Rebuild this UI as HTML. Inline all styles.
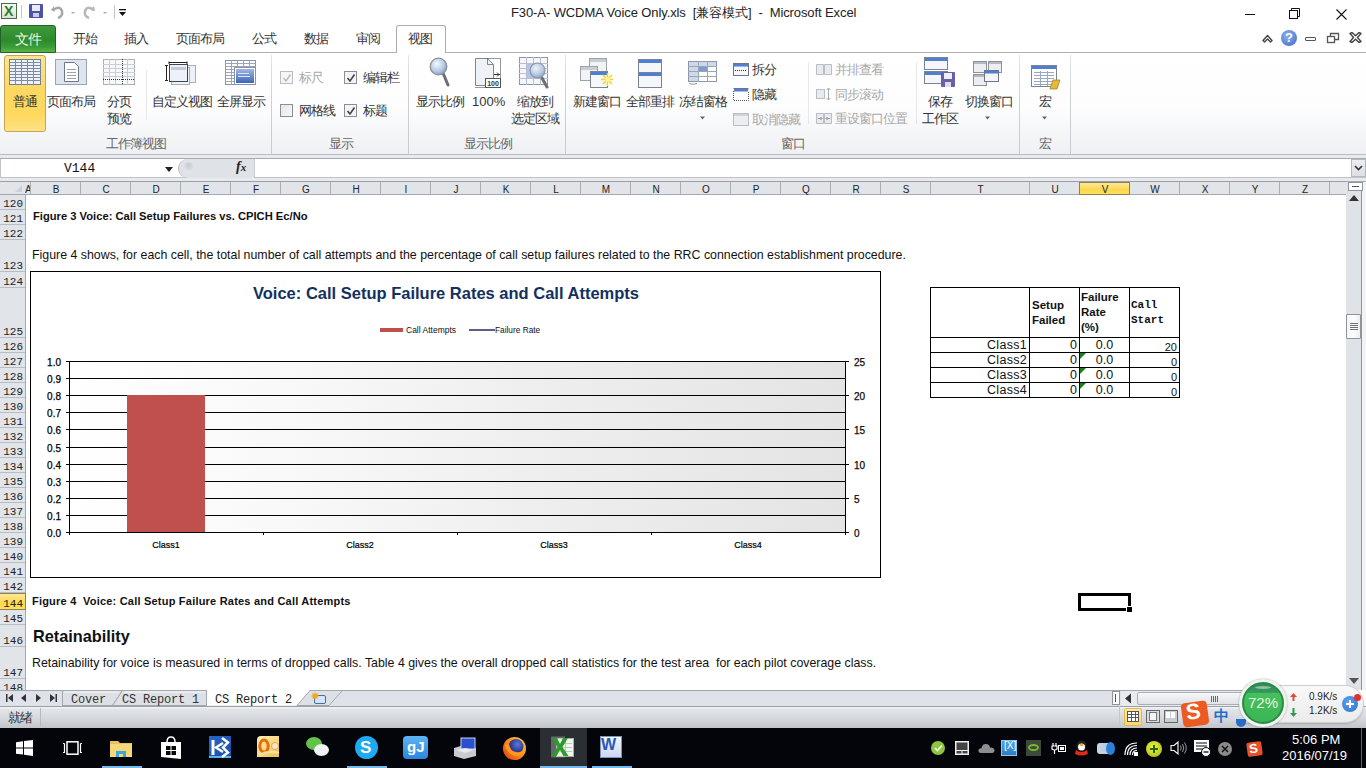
<!DOCTYPE html>
<html><head><meta charset="utf-8">
<style>
*{margin:0;padding:0;box-sizing:border-box}
html,body{width:1366px;height:768px;overflow:hidden;background:#fff;font-family:"Liberation Sans",sans-serif;color:#222}
.a{position:absolute}
.t{position:absolute;white-space:nowrap;line-height:1}
.cj{font-size:13px;letter-spacing:-1px;color:#333}
</style></head><body>
<!-- TITLE BAR -->
<div class="a" style="left:0;top:0;width:1366px;height:26px;background:#fff"></div>
<!-- excel icon -->
<div class="a" style="left:1px;top:3px;width:16px;height:16px;border:1px solid #4a6b4a;background:linear-gradient(#f4f8f2,#d5e6d0)"></div>
<div class="t" style="left:4px;top:4px;font-size:14px;font-weight:bold;color:#2d7a2d;">X</div>
<div class="a" style="left:21px;top:5px;width:1px;height:13px;background:#c8c8c8"></div>
<!-- save -->
<div class="a" style="left:29px;top:4px;width:14px;height:14px;background:#4b52a8;border-radius:1px"></div>
<div class="a" style="left:32px;top:5px;width:8px;height:6px;background:#e8ecf8"></div>
<div class="a" style="left:33px;top:13px;width:6px;height:4px;background:#c8cce8"></div>
<!-- undo/redo -->
<svg class="a" style="left:50px;top:4px" width="80" height="16" viewBox="0 0 80 16">
 <path d="M4 6 L4 2 L1 6 L5 8 Z" fill="#a8a8a8"/>
 <path d="M3 6 Q10 1 12 7 Q13 12 8 14" stroke="#a8a8a8" stroke-width="2.5" fill="none"/>
 <path d="M21 8 L25 8 L23 10 Z" fill="#a8a8a8"/>
 <path d="M44 6 Q37 1 35 7 Q34 12 39 14" stroke="#b8b8b8" stroke-width="2.5" fill="none"/>
 <path d="M44 2 L45 7 L40 6 Z" fill="#b8b8b8"/>
 <path d="M53 8 L57 8 L55 10 Z" fill="#a8a8a8"/>
 <rect x="64" y="1" width="1" height="14" fill="#c8c8c8"/>
 <rect x="69" y="5" width="7" height="1.3" fill="#111"/>
 <path d="M69 8 L76 8 L72.5 12 Z" fill="#111"/>
</svg>
<div class="t" style="left:511px;top:6px;font-size:13px;letter-spacing:-0.1px;color:#222">F30-A- WCDMA Voice Only.xls&nbsp; [兼容模式]&nbsp; -&nbsp; Microsoft Excel</div>
<!-- window controls -->
<div class="a" style="left:1245px;top:14px;width:10px;height:1px;background:#111"></div>
<svg class="a" style="left:1289px;top:8px" width="12" height="12"><rect x="0.5" y="2.5" width="8" height="8" fill="none" stroke="#111"/><path d="M2.5 2.5 V0.5 H10.5 V8.5 H8.5" fill="none" stroke="#111"/></svg>
<svg class="a" style="left:1336px;top:9px" width="11" height="11"><path d="M0.5 0.5 L10.5 10.5 M10.5 0.5 L0.5 10.5" stroke="#111" stroke-width="1.1"/></svg>

<!-- TAB ROW -->
<div class="a" style="left:0;top:52px;width:1366px;height:1px;background:#aeb2b8"></div>
<div class="a" style="left:0;top:25px;width:56px;height:28px;border-radius:3px 3px 0 0;background:linear-gradient(#3f9a3a,#2d8a2e 55%,#3a9c36 80%,#58b444);border:1px solid #25602a"></div>
<div class="t cj" style="left:15px;top:32px;color:#eaf8e2;font-size:14px">文件</div>
<div class="t cj" style="left:73px;top:32px">开始</div>
<div class="t cj" style="left:124px;top:32px">插入</div>
<div class="t cj" style="left:176px;top:32px">页面布局</div>
<div class="t cj" style="left:252px;top:32px">公式</div>
<div class="t cj" style="left:304px;top:32px">数据</div>
<div class="t cj" style="left:356px;top:32px">审阅</div>
<div class="a" style="left:396px;top:25px;width:50px;height:29px;background:#fff;border:1px solid #a9adb3;border-bottom:none;border-radius:3px 3px 0 0"></div>
<div class="t cj" style="left:408px;top:32px">视图</div>

<!-- RIBBON BODY -->
<div class="a" id="ribbon" style="left:0;top:53px;width:1366px;height:101px;background:linear-gradient(#fff 0%,#fdfdfe 55%,#eef0f3 100%)"></div>
<div class="a" style="left:0;top:154px;width:1366px;height:1px;background:#b9bec5"></div>
<div class="a" style="left:0;top:155px;width:1366px;height:3px;background:#e8eaee"></div>
<div class="a" style="left:0;top:158px;width:1366px;height:1px;background:#a6abb2"></div>


<!-- RIBBON CONTENT -->
<!-- group separators -->
<div class="a" style="left:271px;top:55px;width:1px;height:99px;background:linear-gradient(#e2e5e9,#cdd1d6 40%,#c8ccd2)"></div>
<div class="a" style="left:408px;top:55px;width:1px;height:99px;background:linear-gradient(#e2e5e9,#cdd1d6 40%,#c8ccd2)"></div>
<div class="a" style="left:565px;top:55px;width:1px;height:99px;background:linear-gradient(#e2e5e9,#cdd1d6 40%,#c8ccd2)"></div>
<div class="a" style="left:1019px;top:55px;width:1px;height:99px;background:linear-gradient(#e2e5e9,#cdd1d6 40%,#c8ccd2)"></div>
<div class="a" style="left:1070px;top:55px;width:1px;height:99px;background:linear-gradient(#e2e5e9,#cdd1d6 40%,#c8ccd2)"></div>
<div class="a" style="left:146px;top:70px;width:1px;height:50px;background:#e6e8eb"></div>
<div class="a" style="left:808px;top:62px;width:1px;height:62px;background:#e6e8eb"></div>
<div class="a" style="left:916px;top:62px;width:1px;height:62px;background:#e6e8eb"></div>
<!-- normal view highlighted -->
<div class="a" style="left:4px;top:55px;width:42px;height:77px;border:1px solid #c9a352;border-radius:3px;background:linear-gradient(#fde48e,#fcd862 45%,#fdd95e 80%,#fde38a 100%)"></div>
<svg class="a" style="left:9px;top:59px" width="32" height="26" viewBox="0 0 32 26">
 <rect x="0.5" y="0.5" width="31" height="25" fill="#eef2fb" stroke="#6f7c94"/>
 <g stroke="#7d8aa3" stroke-width="1"><path d="M0 3.5H32M0 6.5H32M0 9.5H32M0 12.5H32M0 15.5H32M0 18.5H32M0 21.5H32M6.5 0V26M12.5 0V26M18.5 0V26M24.5 0V26"/></g>
</svg>
<div class="t cj" style="left:13px;top:95px">普通</div>
<!-- page layout -->
<svg class="a" style="left:55px;top:59px" width="32" height="26" viewBox="0 0 32 26">
 <rect x="0.5" y="0.5" width="31" height="25" fill="#dfe5ee" stroke="#9aa4b3"/>
 <path d="M9.5 3.5H19.5L23.5 7.5V22.5H9.5Z" fill="#fff" stroke="#6f7886"/>
 <g stroke="#9aa4b3"><path d="M12 10.5H21M12 13.5H21M12 16.5H21M12 19.5H21"/></g>
</svg>
<div class="t cj" style="left:47px;top:95px">页面布局</div>
<!-- page break -->
<svg class="a" style="left:103px;top:59px" width="32" height="26" viewBox="0 0 32 26">
 <rect x="0.5" y="0.5" width="31" height="25" fill="#f7f8fa" stroke="#a9b0bb"/>
 <g stroke="#c9ced6"><path d="M0 5.5H32M0 9.5H32M0 13.5H32M0 17.5H32M6.5 0V26M12.5 0V26M24.5 0V26"/></g>
 <path d="M19.5 0V26M0 20.5H32" stroke="#333" stroke-dasharray="1 1"/>
</svg>
<div class="t cj" style="left:107px;top:95px">分页</div>
<div class="t cj" style="left:107px;top:112px">预览</div>
<!-- custom views -->
<svg class="a" style="left:165px;top:61px" width="32" height="25" viewBox="0 0 32 25">
 <rect x="11.5" y="4.5" width="19" height="17" fill="#eef0f4" stroke="#a9aeb7"/>
 <rect x="6.5" y="6.5" width="18" height="17" fill="#f0f3f8" stroke="#a9aeb7"/>
 <rect x="4.5" y="3.5" width="18" height="17" fill="#edf1f8" stroke="#3f4552"/>
 <rect x="6" y="6" width="15" height="3" fill="#c6cad2"/>
 <path d="M1.5 4V20M0 4.5H3M0 19.5H3M4 0.5V3M22 0.5V3M4 1.5H22" stroke="#222"/>
</svg>
<div class="t cj" style="left:152px;top:95px">自定义视图</div>
<!-- full screen -->
<svg class="a" style="left:225px;top:60px" width="32" height="25" viewBox="0 0 32 25">
 <rect x="0.5" y="0.5" width="30" height="24" fill="#fff" stroke="#8793a6"/>
 <g stroke="#9aa6b8"><path d="M0 3.5H31M0 6.5H31M0 9.5H31M0 12.5H31M0 15.5H31M0 18.5H31M0 21.5H31M6.5 0V25M12.5 0V25M18.5 0V25M24.5 0V25"/></g>
 <rect x="9.5" y="7.5" width="21" height="17" fill="#fff" stroke="#8793a6"/>
 <rect x="11" y="9" width="18" height="14" fill="url(#fsg)"/>
 <defs><linearGradient id="fsg" x1="0" y1="0" x2="0" y2="1"><stop offset="0" stop-color="#9fb8e4"/><stop offset="1" stop-color="#3d64b8"/></linearGradient></defs>
 <path d="M13 13.5H24M13 16.5H25" stroke="#dfe8f8"/>
</svg>
<div class="t cj" style="left:217px;top:95px">全屏显示</div>
<div class="t cj" style="left:106px;top:137px;color:#666">工作簿视图</div>

<!-- SHOW group -->
<div class="a" style="left:280px;top:71px;width:13px;height:13px;border:1px solid #b9bdc3;background:#f5f6f8"></div>
<svg class="a" style="left:282px;top:73px" width="10" height="10"><path d="M1.5 5 L4 8 L8.5 1.5" stroke="#b9bdc3" stroke-width="1.6" fill="none"/></svg>
<div class="t cj" style="left:299px;top:71px;color:#a8a8a8">标尺</div>
<div class="a" style="left:344px;top:71px;width:13px;height:13px;border:1px solid #8b8f95;background:#f3f4f6"></div>
<svg class="a" style="left:346px;top:73px" width="10" height="10"><path d="M1.5 5 L4 8 L8.5 1.5" stroke="#444" stroke-width="1.6" fill="none"/></svg>
<div class="t cj" style="left:363px;top:71px">编辑栏</div>
<div class="a" style="left:280px;top:104px;width:13px;height:13px;border:1px solid #8b8f95;background:linear-gradient(135deg,#e3e5e8,#f8f9fa)"></div>
<div class="t cj" style="left:299px;top:104px">网格线</div>
<div class="a" style="left:344px;top:104px;width:13px;height:13px;border:1px solid #8b8f95;background:#f3f4f6"></div>
<svg class="a" style="left:346px;top:106px" width="10" height="10"><path d="M1.5 5 L4 8 L8.5 1.5" stroke="#444" stroke-width="1.6" fill="none"/></svg>
<div class="t cj" style="left:363px;top:104px">标题</div>
<div class="t cj" style="left:329px;top:137px;color:#666">显示</div>

<!-- ZOOM group -->
<svg class="a" style="left:428px;top:57px" width="24" height="32" viewBox="0 0 24 32">
 <defs><radialGradient id="mg" cx="0.4" cy="0.35" r="0.7"><stop offset="0" stop-color="#f4f8fc"/><stop offset="0.6" stop-color="#b8cde4"/><stop offset="1" stop-color="#7f9cc0"/></radialGradient></defs>
 <path d="M15 16 L20 28" stroke="#6b6f76" stroke-width="3" stroke-linecap="round"/>
 <circle cx="10.5" cy="9.5" r="8.3" fill="url(#mg)" stroke="#8a9099" stroke-width="1.3"/>
</svg>
<div class="t cj" style="left:416px;top:95px">显示比例</div>
<svg class="a" style="left:474px;top:57px" width="28" height="32" viewBox="0 0 28 32">
 <path d="M1.5 1.5H13.5L19.5 7.5V28.5H1.5Z" fill="#eef1f6" stroke="#7e8794"/>
 <path d="M13.5 1.5V7.5H19.5" fill="none" stroke="#7e8794"/>
 <path d="M1.5 30.5H26.5V1.5H13" fill="none" stroke="#333" stroke-dasharray="1 1"/>
 <path d="M20 17.5H26M23 15.5L25 17.5L23 19.5" stroke="#333" fill="none"/>
 <rect x="11.5" y="21.5" width="15" height="9" fill="#fff" stroke="#555"/>
 <text x="19" y="29" font-size="7" text-anchor="middle" font-family="Liberation Sans" font-weight="bold" fill="#333">100</text>
</svg>
<div class="t" style="left:472px;top:95px;font-size:13px;color:#333">100%</div>
<svg class="a" style="left:519px;top:57px" width="32" height="32" viewBox="0 0 32 32">
 <rect x="0.5" y="0.5" width="28" height="27" fill="#f4f6fb" stroke="#8d97a8"/>
 <g stroke="#b6c0d2"><path d="M0 6.5H29M0 11.5H29M0 16.5H29M0 21.5H29M7.5 0V28M14.5 0V28M21.5 0V28"/></g>
 <rect x="8" y="7" width="13" height="14" fill="#b5c3ea"/>
 <path d="M23 21 L28 30" stroke="#6b6f76" stroke-width="3" stroke-linecap="round"/>
 <circle cx="18.5" cy="13.5" r="7.5" fill="url(#mg)" stroke="#8a9099" stroke-width="1.2" opacity="0.9"/>
</svg>
<div class="t cj" style="left:517px;top:95px">缩放到</div>
<div class="t cj" style="left:511px;top:112px">选定区域</div>
<div class="t cj" style="left:464px;top:137px;color:#666">显示比例</div>

<!-- WINDOW group -->
<svg class="a" style="left:580px;top:58px" width="33" height="30" viewBox="0 0 33 30">
 <rect x="9.5" y="0.5" width="17" height="15" fill="#f2f3f5" stroke="#9ea3ab"/><rect x="10" y="1" width="16" height="3" fill="#c9cdd3"/>
 <rect x="0.5" y="8.5" width="17" height="14" fill="#f2f3f5" stroke="#9ea3ab"/><rect x="1" y="9" width="16" height="3" fill="#c9cdd3"/>
 <rect x="10.5" y="13.5" width="17" height="16" fill="#f6f8fb" stroke="#7a8391"/><rect x="11" y="14" width="16" height="3" fill="#4f7fd0"/>
 <path d="M23 17 L32 26 M32 17 L23 26 M27.5 15 V28 M21 21.5 H33" stroke="#f3d31b" stroke-width="1.5"/>
 <circle cx="27.5" cy="21.5" r="2.5" fill="#fff59a"/>
</svg>
<div class="t cj" style="left:573px;top:95px">新建窗口</div>
<svg class="a" style="left:638px;top:59px" width="24" height="29" viewBox="0 0 24 29">
 <rect x="0.5" y="0.5" width="23" height="28" fill="#f4f6fa" stroke="#7a8391"/>
 <rect x="1" y="1" width="22" height="3" fill="#4f7fd0"/>
 <rect x="1" y="14" width="22" height="3" fill="#4f7fd0"/>
 <path d="M0 13.5H24" stroke="#7a8391"/>
</svg>
<div class="t cj" style="left:626px;top:95px">全部重排</div>
<svg class="a" style="left:688px;top:61px" width="30" height="24" viewBox="0 0 30 24">
 <rect x="0.5" y="0.5" width="28" height="20" fill="#fff" stroke="#8d97a8"/>
 <rect x="1" y="1" width="9" height="19" fill="#cfd8e8"/><rect x="1" y="1" width="27" height="4" fill="#cfd8e8"/>
 <g stroke="#9aa6ba"><path d="M0 5.5H29M0 10.5H29M0 15.5H29M10.5 0V21M19.5 0V21"/></g>
 <rect x="11" y="6" width="8" height="4" fill="#7d9bd3"/>
 <path d="M1 22.5 Q5 24 9 22.5" stroke="#8d97a8" fill="none"/>
</svg>
<div class="t cj" style="left:679px;top:95px">冻结窗格</div>
<svg class="a" style="left:699px;top:116px" width="7" height="4"><path d="M1 0.5H6L3.5 3.5Z" fill="#666"/></svg>
<svg class="a" style="left:733px;top:63px" width="16" height="13" viewBox="0 0 16 13">
 <rect x="0.5" y="0.5" width="15" height="12" fill="#f4f6fa" stroke="#6d7685"/><rect x="1" y="1" width="14" height="2.5" fill="#4f7fd0"/>
 <path d="M2 7.5H14" stroke="#333" stroke-dasharray="1 1"/>
</svg>
<div class="t cj" style="left:752px;top:63px">拆分</div>
<svg class="a" style="left:733px;top:88px" width="16" height="13" viewBox="0 0 16 13">
 <rect x="1" y="1" width="14" height="2.5" fill="#4f7fd0"/><path d="M0.5 0.5H15.5" stroke="#6d7685"/>
 <path d="M0.5 3V12.5H15.5V3" fill="none" stroke="#555" stroke-dasharray="1 1"/>
</svg>
<div class="t cj" style="left:752px;top:88px">隐藏</div>
<svg class="a" style="left:733px;top:113px" width="16" height="13" viewBox="0 0 16 13">
 <rect x="0.5" y="0.5" width="15" height="12" fill="#eceef1" stroke="#b9bec5"/><rect x="1" y="1" width="14" height="2" fill="#cfd3d9"/>
</svg>
<div class="t cj" style="left:752px;top:113px;color:#a8a8a8">取消隐藏</div>
<svg class="a" style="left:816px;top:63px" width="16" height="12" viewBox="0 0 16 12">
 <path d="M0.5 1.5H7.5V11.5H0.5Z M8.5 1.5H15.5V11.5H8.5Z" fill="#e8eaed" stroke="#b9bec5"/>
</svg>
<div class="t cj" style="left:835px;top:63px;color:#a8a8a8">并排查看</div>
<svg class="a" style="left:816px;top:87px" width="16" height="14" viewBox="0 0 16 14">
 <rect x="0.5" y="2.5" width="8" height="9" fill="#e8eaed" stroke="#b9bec5"/>
 <path d="M12.5 1V13M10.5 3L12.5 1L14.5 3M10.5 11L12.5 13L14.5 11" stroke="#aaa" fill="none"/>
</svg>
<div class="t cj" style="left:835px;top:88px;color:#a8a8a8">同步滚动</div>
<svg class="a" style="left:816px;top:112px" width="16" height="13" viewBox="0 0 16 13">
 <path d="M0.5 1.5H7.5V11.5H0.5Z M8.5 1.5H15.5V11.5H8.5Z" fill="#e8eaed" stroke="#b9bec5"/>
 <path d="M2 6.5H6M4.5 5L6 6.5L4.5 8M14 6.5H10M11.5 5L10 6.5L11.5 8" stroke="#999" fill="none"/>
</svg>
<div class="t cj" style="left:835px;top:112px;color:#a8a8a8">重设窗口位置</div>
<svg class="a" style="left:924px;top:57px" width="32" height="31" viewBox="0 0 32 31">
 <rect x="0.5" y="0.5" width="23" height="12" fill="#f4f6fa" stroke="#7a8391"/><rect x="1" y="1" width="22" height="3" fill="#4f7fd0"/>
 <rect x="0.5" y="14.5" width="23" height="12" fill="#f4f6fa" stroke="#7a8391"/><rect x="1" y="15" width="22" height="3" fill="#4f7fd0"/>
 <rect x="17" y="15" width="14" height="15" rx="1" fill="#6b5fa8"/>
 <rect x="20" y="16" width="8" height="6" fill="#eef"/><rect x="21" y="25" width="6" height="5" fill="#dde"/>
</svg>
<div class="t cj" style="left:928px;top:95px">保存</div>
<div class="t cj" style="left:922px;top:112px">工作区</div>
<svg class="a" style="left:973px;top:61px" width="30" height="25" viewBox="0 0 30 25">
 <rect x="0.5" y="0.5" width="13" height="11" fill="#eceef1" stroke="#8b9099"/><rect x="1" y="1" width="12" height="2" fill="#b5bac1"/>
 <rect x="15.5" y="0.5" width="13" height="11" fill="#eceef1" stroke="#8b9099"/><rect x="16" y="1" width="12" height="2" fill="#b5bac1"/>
 <rect x="0.5" y="13.5" width="13" height="11" fill="#eceef1" stroke="#8b9099"/><rect x="1" y="14" width="12" height="2" fill="#b5bac1"/>
 <rect x="11.5" y="9.5" width="14" height="11" fill="#f4f6fa" stroke="#6d7685"/><rect x="12" y="10" width="13" height="2.5" fill="#4f7fd0"/>
</svg>
<div class="t cj" style="left:965px;top:95px">切换窗口</div>
<svg class="a" style="left:984px;top:116px" width="7" height="4"><path d="M1 0.5H6L3.5 3.5Z" fill="#666"/></svg>
<div class="t cj" style="left:781px;top:137px;color:#666">窗口</div>

<!-- MACRO group -->
<svg class="a" style="left:1031px;top:65px" width="30" height="25" viewBox="0 0 30 25">
 <rect x="0.5" y="0.5" width="25" height="21" fill="#fff" stroke="#7a8391"/><rect x="1" y="1" width="24" height="3" fill="#4f7fd0"/>
 <g stroke="#98a8c4"><path d="M3 7.5H23M3 10.5H23M3 13.5H23M3 16.5H23M3 19.5H23M9.5 6V21M16.5 6V21"/></g>
 <path d="M19 24 L22 15 L29 15 L26 24 Z" fill="#e2b93b" stroke="#a8841c" stroke-width="0.8"/>
</svg>
<div class="t cj" style="left:1039px;top:95px">宏</div>
<svg class="a" style="left:1041px;top:116px" width="7" height="4"><path d="M1 0.5H6L3.5 3.5Z" fill="#666"/></svg>
<div class="t cj" style="left:1039px;top:137px;color:#666">宏</div>

<!-- right of tabs -->
<svg class="a" style="left:1262px;top:34px" width="11" height="9" viewBox="0 0 11 9"><path d="M1 6.5 L5.5 1.5 L10 6.5 L8.5 8 L5.5 5 L2.5 8 Z" fill="#fff" stroke="#444" stroke-width="1.4" stroke-linejoin="round"/></svg>
<div class="a" style="left:1281px;top:30px;width:16px;height:16px;border-radius:50%;background:radial-gradient(circle at 40% 35%,#8fb0ea,#3a6ac6)"></div>
<div class="t" style="left:1285px;top:31px;font-size:13px;font-weight:bold;color:#fff">?</div>
<div class="a" style="left:1305px;top:37px;width:11px;height:4px;border:1.5px solid #555;border-radius:1px"></div>
<svg class="a" style="left:1326px;top:32px" width="14" height="12"><rect x="1.5" y="4.5" width="7" height="6" fill="none" stroke="#555" stroke-width="1.3"/><path d="M4.5 4.5V1.5H12.5V7.5H8.5" fill="none" stroke="#555" stroke-width="1.3"/></svg>
<svg class="a" style="left:1349px;top:32px" width="13" height="11" viewBox="0 0 13 11"><path d="M1 1.5 L3 0.5 L6.5 3.8 L10 0.5 L12 1.5 L8.5 5.5 L12 9.5 L10 10.5 L6.5 7.2 L3 10.5 L1 9.5 L4.5 5.5 Z" fill="#fff" stroke="#444" stroke-width="1.4" stroke-linejoin="round"/></svg>

<!-- FORMULA BAR -->
<div class="a" style="left:0;top:159px;width:1366px;height:19px;background:#fff"></div>
<div class="a" style="left:0;top:177px;width:1366px;height:1px;background:#c0c4ca"></div>
<div class="a" style="left:0;top:178px;width:1366px;height:3px;background:#e8eaee"></div>
<div class="a" style="left:0;top:181px;width:1366px;height:1px;background:#a6abb2"></div>
<div class="a" style="left:0;top:159px;width:1px;height:19px;background:#c0c4ca"></div>
<div class="t" style="left:64px;top:162px;font-family:'Liberation Mono',monospace;font-size:13px;color:#111">V144</div>
<svg class="a" style="left:165px;top:167px" width="8" height="5"><path d="M0 0H8L4 5Z" fill="#222"/></svg>
<div class="a" style="left:178px;top:159px;width:77px;height:19px;background:#dfe2e7;border-radius:10px 0 0 10px;border-left:1px solid #b9bdc4"></div>
<div class="a" style="left:183px;top:162px;width:11px;height:11px;border-radius:50%;background:radial-gradient(circle at 50% 30%,#c6c9ce,#e4e6ea 70%)"></div>
<div class="a" style="left:254px;top:159px;width:1px;height:19px;background:#c9cdd2"></div>
<div class="t" style="left:236px;top:160px;font-family:'Liberation Serif',serif;font-style:italic;font-weight:bold;font-size:14px;color:#222">f<span style="font-size:11px">x</span></div>
<div class="a" style="left:1351px;top:159px;width:15px;height:18px;background:linear-gradient(#eceef1,#dcdfe4);border:1px solid #b5bac1"></div>
<svg class="a" style="left:1354px;top:165px" width="9" height="6"><path d="M1 1 L4.5 4.5 L8 1" stroke="#333" stroke-width="1.6" fill="none"/></svg>

<!-- COLUMN HEADERS -->
<div class="a" style="left:0;top:181px;width:1346px;height:14px;background:#e1e4e8;border-top:1px solid #9a9fa6;border-bottom:1px solid #a4a9b0"></div>
<svg class="a" style="left:15px;top:185px" width="7" height="7"><path d="M7 0V7H0Z" fill="#cdd1d6"/></svg>
<div class="a" style="left:30px;top:182px;width:1px;height:12px;background:#a9aeb5"></div>
<div class="a" style="left:80px;top:182px;width:1px;height:12px;background:#a9aeb5"></div>
<div class="t" style="left:31px;top:185px;width:50px;text-align:center;font-size:10px;color:#222">B</div>
<div class="a" style="left:130px;top:182px;width:1px;height:12px;background:#a9aeb5"></div>
<div class="t" style="left:81px;top:185px;width:50px;text-align:center;font-size:10px;color:#222">C</div>
<div class="a" style="left:180px;top:182px;width:1px;height:12px;background:#a9aeb5"></div>
<div class="t" style="left:131px;top:185px;width:50px;text-align:center;font-size:10px;color:#222">D</div>
<div class="a" style="left:230px;top:182px;width:1px;height:12px;background:#a9aeb5"></div>
<div class="t" style="left:181px;top:185px;width:50px;text-align:center;font-size:10px;color:#222">E</div>
<div class="a" style="left:280px;top:182px;width:1px;height:12px;background:#a9aeb5"></div>
<div class="t" style="left:231px;top:185px;width:50px;text-align:center;font-size:10px;color:#222">F</div>
<div class="a" style="left:330px;top:182px;width:1px;height:12px;background:#a9aeb5"></div>
<div class="t" style="left:281px;top:185px;width:50px;text-align:center;font-size:10px;color:#222">G</div>
<div class="a" style="left:380px;top:182px;width:1px;height:12px;background:#a9aeb5"></div>
<div class="t" style="left:331px;top:185px;width:50px;text-align:center;font-size:10px;color:#222">H</div>
<div class="a" style="left:430px;top:182px;width:1px;height:12px;background:#a9aeb5"></div>
<div class="t" style="left:381px;top:185px;width:50px;text-align:center;font-size:10px;color:#222">I</div>
<div class="a" style="left:480px;top:182px;width:1px;height:12px;background:#a9aeb5"></div>
<div class="t" style="left:431px;top:185px;width:50px;text-align:center;font-size:10px;color:#222">J</div>
<div class="a" style="left:530px;top:182px;width:1px;height:12px;background:#a9aeb5"></div>
<div class="t" style="left:481px;top:185px;width:50px;text-align:center;font-size:10px;color:#222">K</div>
<div class="a" style="left:580px;top:182px;width:1px;height:12px;background:#a9aeb5"></div>
<div class="t" style="left:531px;top:185px;width:50px;text-align:center;font-size:10px;color:#222">L</div>
<div class="a" style="left:630px;top:182px;width:1px;height:12px;background:#a9aeb5"></div>
<div class="t" style="left:581px;top:185px;width:50px;text-align:center;font-size:10px;color:#222">M</div>
<div class="a" style="left:680px;top:182px;width:1px;height:12px;background:#a9aeb5"></div>
<div class="t" style="left:631px;top:185px;width:50px;text-align:center;font-size:10px;color:#222">N</div>
<div class="a" style="left:730px;top:182px;width:1px;height:12px;background:#a9aeb5"></div>
<div class="t" style="left:681px;top:185px;width:50px;text-align:center;font-size:10px;color:#222">O</div>
<div class="a" style="left:780px;top:182px;width:1px;height:12px;background:#a9aeb5"></div>
<div class="t" style="left:731px;top:185px;width:50px;text-align:center;font-size:10px;color:#222">P</div>
<div class="a" style="left:830px;top:182px;width:1px;height:12px;background:#a9aeb5"></div>
<div class="t" style="left:781px;top:185px;width:50px;text-align:center;font-size:10px;color:#222">Q</div>
<div class="a" style="left:880px;top:182px;width:1px;height:12px;background:#a9aeb5"></div>
<div class="t" style="left:831px;top:185px;width:50px;text-align:center;font-size:10px;color:#222">R</div>
<div class="a" style="left:930px;top:182px;width:1px;height:12px;background:#a9aeb5"></div>
<div class="t" style="left:881px;top:185px;width:50px;text-align:center;font-size:10px;color:#222">S</div>
<div class="a" style="left:1029px;top:182px;width:1px;height:12px;background:#a9aeb5"></div>
<div class="t" style="left:931px;top:185px;width:99px;text-align:center;font-size:10px;color:#222">T</div>
<div class="a" style="left:1079px;top:182px;width:1px;height:12px;background:#a9aeb5"></div>
<div class="t" style="left:1030px;top:185px;width:50px;text-align:center;font-size:10px;color:#222">U</div>
<div class="a" style="left:1079px;top:182px;width:51px;height:13px;background:linear-gradient(#fde89a,#fcd84e 60%,#fde25a);border:1px solid #8f7f52"></div>
<div class="t" style="left:1080px;top:185px;width:50px;text-align:center;font-size:10px;color:#222">V</div>
<div class="a" style="left:1179px;top:182px;width:1px;height:12px;background:#a9aeb5"></div>
<div class="t" style="left:1130px;top:185px;width:50px;text-align:center;font-size:10px;color:#222">W</div>
<div class="a" style="left:1229px;top:182px;width:1px;height:12px;background:#a9aeb5"></div>
<div class="t" style="left:1180px;top:185px;width:50px;text-align:center;font-size:10px;color:#222">X</div>
<div class="a" style="left:1279px;top:182px;width:1px;height:12px;background:#a9aeb5"></div>
<div class="t" style="left:1230px;top:185px;width:50px;text-align:center;font-size:10px;color:#222">Y</div>
<div class="a" style="left:1329px;top:182px;width:1px;height:12px;background:#a9aeb5"></div>
<div class="t" style="left:1280px;top:185px;width:50px;text-align:center;font-size:10px;color:#222">Z</div>
<div class="t" style="left:25px;top:185px;width:5px;overflow:hidden;font-size:10px;color:#222">A</div>

<!-- ROW HEADERS -->
<div class="a" style="left:0;top:195px;width:26px;height:495px;background:#e1e4e8;border-right:1px solid #a4a9b0"></div>
<div class="a" style="left:0;top:209px;width:25px;height:1px;background:#b7bdc5"></div>
<div class="t" style="left:0;top:199px;width:23px;text-align:right;font-family:'Liberation Mono',monospace;font-size:11px;color:#222">120</div>
<div class="a" style="left:0;top:224px;width:25px;height:1px;background:#b7bdc5"></div>
<div class="t" style="left:0;top:214px;width:23px;text-align:right;font-family:'Liberation Mono',monospace;font-size:11px;color:#222">121</div>
<div class="a" style="left:0;top:239px;width:25px;height:1px;background:#b7bdc5"></div>
<div class="t" style="left:0;top:229px;width:23px;text-align:right;font-family:'Liberation Mono',monospace;font-size:11px;color:#222">122</div>
<div class="a" style="left:0;top:271px;width:25px;height:1px;background:#b7bdc5"></div>
<div class="t" style="left:0;top:261px;width:23px;text-align:right;font-family:'Liberation Mono',monospace;font-size:11px;color:#222">123</div>
<div class="a" style="left:0;top:287px;width:25px;height:1px;background:#b7bdc5"></div>
<div class="t" style="left:0;top:277px;width:23px;text-align:right;font-family:'Liberation Mono',monospace;font-size:11px;color:#222">124</div>
<div class="a" style="left:0;top:337px;width:25px;height:1px;background:#b7bdc5"></div>
<div class="t" style="left:0;top:327px;width:23px;text-align:right;font-family:'Liberation Mono',monospace;font-size:11px;color:#222">125</div>
<div class="a" style="left:0;top:352px;width:25px;height:1px;background:#b7bdc5"></div>
<div class="t" style="left:0;top:342px;width:23px;text-align:right;font-family:'Liberation Mono',monospace;font-size:11px;color:#222">126</div>
<div class="a" style="left:0;top:367px;width:25px;height:1px;background:#b7bdc5"></div>
<div class="t" style="left:0;top:357px;width:23px;text-align:right;font-family:'Liberation Mono',monospace;font-size:11px;color:#222">127</div>
<div class="a" style="left:0;top:382px;width:25px;height:1px;background:#b7bdc5"></div>
<div class="t" style="left:0;top:372px;width:23px;text-align:right;font-family:'Liberation Mono',monospace;font-size:11px;color:#222">128</div>
<div class="a" style="left:0;top:397px;width:25px;height:1px;background:#b7bdc5"></div>
<div class="t" style="left:0;top:387px;width:23px;text-align:right;font-family:'Liberation Mono',monospace;font-size:11px;color:#222">129</div>
<div class="a" style="left:0;top:412px;width:25px;height:1px;background:#b7bdc5"></div>
<div class="t" style="left:0;top:402px;width:23px;text-align:right;font-family:'Liberation Mono',monospace;font-size:11px;color:#222">130</div>
<div class="a" style="left:0;top:427px;width:25px;height:1px;background:#b7bdc5"></div>
<div class="t" style="left:0;top:417px;width:23px;text-align:right;font-family:'Liberation Mono',monospace;font-size:11px;color:#222">131</div>
<div class="a" style="left:0;top:442px;width:25px;height:1px;background:#b7bdc5"></div>
<div class="t" style="left:0;top:432px;width:23px;text-align:right;font-family:'Liberation Mono',monospace;font-size:11px;color:#222">132</div>
<div class="a" style="left:0;top:457px;width:25px;height:1px;background:#b7bdc5"></div>
<div class="t" style="left:0;top:447px;width:23px;text-align:right;font-family:'Liberation Mono',monospace;font-size:11px;color:#222">133</div>
<div class="a" style="left:0;top:472px;width:25px;height:1px;background:#b7bdc5"></div>
<div class="t" style="left:0;top:462px;width:23px;text-align:right;font-family:'Liberation Mono',monospace;font-size:11px;color:#222">134</div>
<div class="a" style="left:0;top:487px;width:25px;height:1px;background:#b7bdc5"></div>
<div class="t" style="left:0;top:477px;width:23px;text-align:right;font-family:'Liberation Mono',monospace;font-size:11px;color:#222">135</div>
<div class="a" style="left:0;top:502px;width:25px;height:1px;background:#b7bdc5"></div>
<div class="t" style="left:0;top:492px;width:23px;text-align:right;font-family:'Liberation Mono',monospace;font-size:11px;color:#222">136</div>
<div class="a" style="left:0;top:517px;width:25px;height:1px;background:#b7bdc5"></div>
<div class="t" style="left:0;top:507px;width:23px;text-align:right;font-family:'Liberation Mono',monospace;font-size:11px;color:#222">137</div>
<div class="a" style="left:0;top:532px;width:25px;height:1px;background:#b7bdc5"></div>
<div class="t" style="left:0;top:522px;width:23px;text-align:right;font-family:'Liberation Mono',monospace;font-size:11px;color:#222">138</div>
<div class="a" style="left:0;top:547px;width:25px;height:1px;background:#b7bdc5"></div>
<div class="t" style="left:0;top:537px;width:23px;text-align:right;font-family:'Liberation Mono',monospace;font-size:11px;color:#222">139</div>
<div class="a" style="left:0;top:562px;width:25px;height:1px;background:#b7bdc5"></div>
<div class="t" style="left:0;top:552px;width:23px;text-align:right;font-family:'Liberation Mono',monospace;font-size:11px;color:#222">140</div>
<div class="a" style="left:0;top:577px;width:25px;height:1px;background:#b7bdc5"></div>
<div class="t" style="left:0;top:567px;width:23px;text-align:right;font-family:'Liberation Mono',monospace;font-size:11px;color:#222">141</div>
<div class="a" style="left:0;top:592px;width:25px;height:1px;background:#b7bdc5"></div>
<div class="t" style="left:0;top:582px;width:23px;text-align:right;font-family:'Liberation Mono',monospace;font-size:11px;color:#222">142</div>
<div class="a" style="left:0;top:593px;width:26px;height:17px;background:linear-gradient(#fde89a,#fcd84e 60%,#fde25a);border:1px solid #8f7f52;border-left:none"></div>
<div class="t" style="left:0;top:599px;width:23px;text-align:right;font-family:'Liberation Mono',monospace;font-size:11px;color:#222">144</div>
<div class="a" style="left:0;top:624px;width:25px;height:1px;background:#b7bdc5"></div>
<div class="t" style="left:0;top:614px;width:23px;text-align:right;font-family:'Liberation Mono',monospace;font-size:11px;color:#222">145</div>
<div class="a" style="left:0;top:646px;width:25px;height:1px;background:#b7bdc5"></div>
<div class="t" style="left:0;top:636px;width:23px;text-align:right;font-family:'Liberation Mono',monospace;font-size:11px;color:#222">146</div>
<div class="a" style="left:0;top:678px;width:25px;height:1px;background:#b7bdc5"></div>
<div class="t" style="left:0;top:668px;width:23px;text-align:right;font-family:'Liberation Mono',monospace;font-size:11px;color:#222">147</div>
<div class="t" style="left:0;top:683px;width:23px;text-align:right;font-family:'Liberation Mono',monospace;font-size:11px;color:#222">148</div>

<!-- SHEET CONTENT -->
<div class="t" style="left:33px;top:211px;font-size:11.2px;font-weight:bold;color:#111">Figure 3 Voice: Call Setup Failures vs. CPICH Ec/No</div>
<div class="t" style="left:32px;top:249px;font-size:12.36px;color:#111">Figure 4 shows, for each cell, the total number of call attempts and the percentage of call setup failures related to the RRC connection establishment procedure.</div>

<!-- CHART -->
<div class="a" style="left:30px;top:271px;width:851px;height:307px;border:1px solid #000;background:#fff"></div>
<div class="a" style="left:70px;top:361px;width:775px;height:171px;background:linear-gradient(90deg,#fff 0%,#f8f8f8 30%,#eeeeee 62%,#e4e4e4 100%)"></div>
<div class="t" style="left:253px;top:285px;font-size:16.5px;font-weight:bold;color:#13315f">Voice: Call Setup Failure Rates and Call Attempts</div>
<div class="a" style="left:380px;top:328px;width:23px;height:4px;background:#c0504d"></div>
<div class="t" style="left:406px;top:326px;font-size:8.5px;color:#111">Call Attempts</div>
<div class="a" style="left:469px;top:329px;width:26px;height:2px;background:#5e5f87"></div>
<div class="t" style="left:495px;top:326px;font-size:8.3px;color:#111">Failure Rate</div>
<svg class="a" style="left:30px;top:271px" width="851" height="307">
 <rect x="36" y="90" width="779" height="1" fill="#000"/><rect x="36" y="107" width="779" height="1" fill="#000"/><rect x="36" y="124" width="779" height="1" fill="#000"/><rect x="36" y="141" width="779" height="1" fill="#000"/><rect x="36" y="158" width="779" height="1" fill="#000"/><rect x="36" y="176" width="779" height="1" fill="#000"/><rect x="36" y="193" width="779" height="1" fill="#000"/><rect x="36" y="210" width="779" height="1" fill="#000"/><rect x="36" y="227" width="779" height="1" fill="#000"/><rect x="36" y="244" width="779" height="1" fill="#000"/><rect x="36" y="261" width="779" height="1" fill="#000"/>
 <rect x="97" y="124" width="78" height="137" fill="#c0504d"/>
 <rect x="39" y="90" width="1" height="174" fill="#000"/>
 <rect x="815" y="90" width="1" height="174" fill="#000"/>
 <rect x="233" y="261" width="1" height="3" fill="#000"/>
 <rect x="427" y="261" width="1" height="3" fill="#000"/>
 <rect x="621" y="261" width="1" height="3" fill="#000"/>
 <rect x="815" y="90" width="4" height="1" fill="#000"/><rect x="815" y="124" width="4" height="1" fill="#000"/><rect x="815" y="158" width="4" height="1" fill="#000"/><rect x="815" y="193" width="4" height="1" fill="#000"/><rect x="815" y="227" width="4" height="1" fill="#000"/><rect x="815" y="261" width="4" height="1" fill="#000"/>
</svg>
<div class="t" style="left:30px;top:358px;width:31px;text-align:right;font-size:10px;color:#000;-webkit-text-stroke:0.25px #000">1.0</div><div class="t" style="left:30px;top:375px;width:31px;text-align:right;font-size:10px;color:#000;-webkit-text-stroke:0.25px #000">0.9</div><div class="t" style="left:30px;top:392px;width:31px;text-align:right;font-size:10px;color:#000;-webkit-text-stroke:0.25px #000">0.8</div><div class="t" style="left:30px;top:409px;width:31px;text-align:right;font-size:10px;color:#000;-webkit-text-stroke:0.25px #000">0.7</div><div class="t" style="left:30px;top:426px;width:31px;text-align:right;font-size:10px;color:#000;-webkit-text-stroke:0.25px #000">0.6</div><div class="t" style="left:30px;top:444px;width:31px;text-align:right;font-size:10px;color:#000;-webkit-text-stroke:0.25px #000">0.5</div><div class="t" style="left:30px;top:461px;width:31px;text-align:right;font-size:10px;color:#000;-webkit-text-stroke:0.25px #000">0.4</div><div class="t" style="left:30px;top:478px;width:31px;text-align:right;font-size:10px;color:#000;-webkit-text-stroke:0.25px #000">0.3</div><div class="t" style="left:30px;top:495px;width:31px;text-align:right;font-size:10px;color:#000;-webkit-text-stroke:0.25px #000">0.2</div><div class="t" style="left:30px;top:512px;width:31px;text-align:right;font-size:10px;color:#000;-webkit-text-stroke:0.25px #000">0.1</div><div class="t" style="left:30px;top:529px;width:31px;text-align:right;font-size:10px;color:#000;-webkit-text-stroke:0.25px #000">0.0</div>
<div class="t" style="left:854px;-webkit-text-stroke:0.25px #000;top:358px;font-size:10px;color:#111">25</div><div class="t" style="left:854px;-webkit-text-stroke:0.25px #000;top:392px;font-size:10px;color:#111">20</div><div class="t" style="left:854px;-webkit-text-stroke:0.25px #000;top:426px;font-size:10px;color:#111">15</div><div class="t" style="left:854px;-webkit-text-stroke:0.25px #000;top:461px;font-size:10px;color:#111">10</div><div class="t" style="left:854px;-webkit-text-stroke:0.25px #000;top:495px;font-size:10px;color:#111">5</div><div class="t" style="left:854px;-webkit-text-stroke:0.25px #000;top:529px;font-size:10px;color:#111">0</div>
<div class="t" style="left:69px;top:541px;width:194px;text-align:center;font-size:9px;color:#000;-webkit-text-stroke:0.2px #000">Class1</div>
<div class="t" style="left:263px;top:541px;width:194px;text-align:center;font-size:9px;color:#000;-webkit-text-stroke:0.2px #000">Class2</div>
<div class="t" style="left:457px;top:541px;width:194px;text-align:center;font-size:9px;color:#000;-webkit-text-stroke:0.2px #000">Class3</div>
<div class="t" style="left:651px;top:541px;width:194px;text-align:center;font-size:9px;color:#000;-webkit-text-stroke:0.2px #000">Class4</div>

<!-- TABLE -->
<div class="a" style="left:930px;top:287px;width:250px;height:111px;border:1px solid #000"></div>
<div class="a" style="left:1029px;top:287px;width:1px;height:111px;background:#000"></div>
<div class="a" style="left:1079px;top:287px;width:1px;height:111px;background:#000"></div>
<div class="a" style="left:1129px;top:287px;width:1px;height:111px;background:#000"></div>
<div class="a" style="left:930px;top:337px;width:250px;height:1px;background:#000"></div>
<div class="a" style="left:930px;top:352px;width:250px;height:1px;background:#000"></div>
<div class="a" style="left:930px;top:367px;width:250px;height:1px;background:#000"></div>
<div class="a" style="left:930px;top:382px;width:250px;height:1px;background:#000"></div>
<div class="t" style="left:1032px;top:298px;font-size:11.5px;font-weight:bold;color:#111;line-height:15px;white-space:normal;width:46px">Setup<br>Failed</div>
<div class="t" style="left:1081px;top:290px;font-size:11.5px;font-weight:bold;color:#111;line-height:15px;white-space:normal;width:46px">Failure<br>Rate<br>(%)</div>
<div class="t" style="left:1131px;top:298px;font-family:'Liberation Mono',monospace;font-size:11px;font-weight:bold;color:#111;line-height:15px;white-space:normal;width:46px">Call<br>Start</div>
<div class="t" style="left:930px;top:339px;width:97px;text-align:right;font-size:12.5px;letter-spacing:0.3px;color:#111">Class1</div>
<div class="t" style="left:1030px;top:339px;width:47px;text-align:right;font-size:12.5px;color:#111">0</div>
<div class="t" style="left:1080px;top:339px;width:49px;text-align:center;font-size:12.5px;color:#111">0.0</div>
<div class="t" style="left:1130px;top:342px;width:47px;text-align:right;font-size:11px;color:#111">20</div>
<div class="t" style="left:930px;top:354px;width:97px;text-align:right;font-size:12.5px;letter-spacing:0.3px;color:#111">Class2</div>
<div class="t" style="left:1030px;top:354px;width:47px;text-align:right;font-size:12.5px;color:#111">0</div>
<div class="t" style="left:1080px;top:354px;width:49px;text-align:center;font-size:12.5px;color:#111">0.0</div>
<div class="t" style="left:1130px;top:357px;width:47px;text-align:right;font-size:11px;color:#111">0</div>
<svg class="a" style="left:1080px;top:353px" width="6" height="6"><path d="M0 0H6L0 6Z" fill="#1a7f1a"/></svg>
<div class="t" style="left:930px;top:369px;width:97px;text-align:right;font-size:12.5px;letter-spacing:0.3px;color:#111">Class3</div>
<div class="t" style="left:1030px;top:369px;width:47px;text-align:right;font-size:12.5px;color:#111">0</div>
<div class="t" style="left:1080px;top:369px;width:49px;text-align:center;font-size:12.5px;color:#111">0.0</div>
<div class="t" style="left:1130px;top:372px;width:47px;text-align:right;font-size:11px;color:#111">0</div>
<svg class="a" style="left:1080px;top:368px" width="6" height="6"><path d="M0 0H6L0 6Z" fill="#1a7f1a"/></svg>
<div class="t" style="left:930px;top:384px;width:97px;text-align:right;font-size:12.5px;letter-spacing:0.3px;color:#111">Class4</div>
<div class="t" style="left:1030px;top:384px;width:47px;text-align:right;font-size:12.5px;color:#111">0</div>
<div class="t" style="left:1080px;top:384px;width:49px;text-align:center;font-size:12.5px;color:#111">0.0</div>
<div class="t" style="left:1130px;top:387px;width:47px;text-align:right;font-size:11px;color:#111">0</div>
<svg class="a" style="left:1080px;top:383px" width="6" height="6"><path d="M0 0H6L0 6Z" fill="#1a7f1a"/></svg>

<!-- selection -->
<div class="a" style="left:1078px;top:593px;width:53px;height:18px;border:3px solid #000"></div>
<div class="a" style="left:1126px;top:606px;width:7px;height:7px;background:#000;border:1px solid #fff"></div>

<div class="t" style="left:32px;top:596px;font-size:11px;font-weight:bold;color:#111;white-space:pre;letter-spacing:0.21px">Figure 4  Voice: Call Setup Failure Rates and Call Attempts</div>
<div class="t" style="left:33px;top:628px;font-size:16.3px;font-weight:bold;color:#111">Retainability</div>
<div class="t" style="left:32px;top:657px;font-size:12.36px;color:#111;white-space:pre">Retainability for voice is measured in terms of dropped calls. Table 4 gives the overall dropped call statistics for the test area  for each pilot coverage class.</div>

<!-- SCROLLBAR V -->
<div class="a" style="left:1346px;top:182px;width:20px;height:508px;background:#f2f3f5"></div>
<div class="a" style="left:1346px;top:182px;width:16px;height:508px;background:#dfe2e7;border-right:1px solid #8e949b"></div>
<div class="a" style="left:1348px;top:182px;width:15px;height:9px;background:#fff;border:1px solid #8e949b"></div>
<div class="a" style="left:1352px;top:186px;width:7px;height:1px;background:#555"></div>
<svg class="a" style="left:1348px;top:194px" width="12" height="8"><path d="M1 7H11L6 1Z" fill="#333"/></svg>
<div class="a" style="left:1346px;top:314px;width:15px;height:25px;background:linear-gradient(90deg,#f4f5f7,#fdfdfe 50%,#eceef1);border:1px solid #8e949b;border-radius:1px"></div>
<div class="a" style="left:1350px;top:323px;width:8px;height:7px;background:repeating-linear-gradient(#6e737a 0 1px,transparent 1px 2px)"></div>
<svg class="a" style="left:1348px;top:677px" width="12" height="8"><path d="M1 1H11L6 7Z" fill="#555"/></svg>

<!-- SHEET TABS -->
<div class="a" style="left:0;top:690px;width:1346px;height:16px;background:#dfe2e8;border-top:1px solid #a2a7ae"></div>
<svg class="a" style="left:4px;top:692px" width="56" height="12" viewBox="0 0 56 12">
 <rect x="2" y="2" width="1.5" height="8" fill="#333"/><path d="M9 2V10L4 6Z" fill="#333"/>
 <path d="M22 2V10L17 6Z" fill="#333"/>
 <path d="M32 2V10L37 6Z" fill="#333"/>
 <path d="M46 2V10L51 6Z" fill="#333"/><rect x="51.5" y="2" width="1.5" height="8" fill="#333"/>
</svg>
<!-- inactive tabs -->
<svg class="a" style="left:0;top:690px" width="350" height="16" viewBox="0 0 350 16">
 <path d="M62.5 0.5 H122.5 L112.5 15.5 H62.5 Z" fill="#dde1e6" stroke="#a3a8af"/>
 <path d="M122.5 0.5 H206.5 V15.5 H112.5 Z" fill="#dde1e6" stroke="#a3a8af"/>
 <path d="M64 2 H119 M124 2 H205" stroke="#f4f5f7"/>
 <path d="M206.5 0 H310 L297 15.5 H206.5 Z" fill="#fff"/>
 <path d="M310 0.5 H342.5 L329 15.5 H297 Z" fill="#dde1e6" stroke="#a3a8af"/>
 <path d="M206.5 0 V15.5" stroke="#a3a8af"/>
</svg>
<div class="t" style="left:71px;top:694px;font-family:'Liberation Mono',monospace;font-size:12px;letter-spacing:-0.2px;color:#333">Cover</div>
<div class="t" style="left:122px;top:694px;font-family:'Liberation Mono',monospace;font-size:12px;letter-spacing:-0.2px;color:#333">CS Report 1</div>
<div class="t" style="left:215px;top:694px;font-family:'Liberation Mono',monospace;font-size:12px;letter-spacing:-0.2px;color:#222">CS Report 2</div>
<svg class="a" style="left:311px;top:692px" width="16" height="13" viewBox="0 0 16 13">
 <rect x="3.5" y="3.5" width="11" height="8" rx="1.5" fill="#d6e6f6" stroke="#3c6fb4"/>
 <path d="M4 0.5 L4 7.5 M0.5 4 L7.5 4 M1.5 1.5 L6.5 6.5 M6.5 1.5 L1.5 6.5" stroke="#f0a818" stroke-width="1.3"/>
</svg>
<!-- h scrollbar -->
<div class="a" style="left:1112px;top:691px;width:8px;height:14px;background:#fff;border:1px solid #8e949b"></div>
<div class="a" style="left:1115px;top:694px;width:1px;height:8px;background:#555"></div>
<div class="a" style="left:1121px;top:691px;width:225px;height:15px;background:#e9ebee"></div>
<svg class="a" style="left:1124px;top:693px" width="8" height="11"><path d="M7 0.5V10.5L1 5.5Z" fill="#333"/></svg>
<div class="a" style="left:1137px;top:692px;width:120px;height:13px;background:linear-gradient(#f6f7f9,#dfe2e6);border:1px solid #a9aeb5;border-radius:2px"></div>
<div class="a" style="left:1211px;top:696px;width:7px;height:6px;background:repeating-linear-gradient(90deg,#666 0 1px,transparent 1px 2px)"></div>

<!-- STATUS BAR -->
<div class="a" style="left:0;top:706px;width:1366px;height:1px;background:#9a9fa6"></div>
<div class="a" style="left:0;top:707px;width:1366px;height:21px;background:linear-gradient(#f6f7f9 0px,#e3e5e9 2px,#d3d6da 60%,#c1c4c9)"></div>
<div class="t cj" style="left:8px;top:711px;color:#333">就绪</div>
<div class="a" style="left:40px;top:708px;width:1px;height:18px;background:#b6bbc1"></div>
<div class="a" style="left:1119px;top:706px;width:1px;height:22px;background:#c3c7cc"></div>
<div class="a" style="left:1124px;top:708px;width:18px;height:18px;border:1px solid #e5b84a;border-radius:2px;background:linear-gradient(#fde9a8,#fbd66e)"></div>
<svg class="a" style="left:1127px;top:711px" width="12" height="11"><rect x="0.5" y="0.5" width="11" height="10" fill="#fff" stroke="#555"/><path d="M0 3.5H12M0 6.5H12M4.5 0V11M8.5 0V11" stroke="#555"/></svg>
<svg class="a" style="left:1146px;top:710px" width="14" height="13"><rect x="0.5" y="0.5" width="13" height="12" fill="#d7dadf" stroke="#666"/><rect x="3.5" y="2.5" width="7" height="8" fill="#f4f5f7" stroke="#777"/></svg>
<svg class="a" style="left:1164px;top:710px" width="14" height="13"><rect x="0.5" y="0.5" width="13" height="12" fill="#c9ccd1" stroke="#666"/><rect x="2" y="2" width="4" height="6" fill="#fff"/><rect x="7" y="2" width="4" height="6" fill="#fff"/></svg>
<!-- sogou S floating -->
<div class="a" style="left:1182px;top:702px;width:26px;height:24px;background:#ec5a22;border-radius:4px;transform:rotate(-8deg)"></div>
<div class="t" style="left:1186px;top:701px;font-size:22px;font-weight:bold;color:#fff;transform:rotate(-8deg)">S</div>
<div class="t" style="left:1214px;top:708px;font-size:15px;color:#1e6fc8;font-weight:bold">中</div>
<div class="a" style="left:1236px;top:719px;width:10px;height:8px;background:#2a6ac8;border-radius:0 0 6px 6px"></div>
<!-- network widget -->
<div class="a" style="left:1246px;top:685px;width:118px;height:38px;background:linear-gradient(#f9f9f9,#ebebeb);border:1px solid #cfcfcf;border-radius:0 19px 19px 0;box-shadow:0 1px 2px rgba(0,0,0,0.18)"></div>
<div class="a" style="left:1239px;top:679px;width:48px;height:48px;border-radius:50%;background:#eef6ee;box-shadow:0 0 2px rgba(0,0,0,0.35)"></div>
<div class="a" style="left:1242px;top:682px;width:42px;height:42px;border-radius:50%;background:linear-gradient(#2f8a58 0%,#3a9a62 24%,#44c05c 25%,#3cb554 100%);border:2px solid #2a8a48"></div>
<div class="a" style="left:1255px;top:686px;width:16px;height:3px;border-radius:50%;background:rgba(255,255,255,0.45)"></div>
<div class="t" style="left:1245px;top:695px;width:36px;text-align:center;font-size:15px;color:#e4f6e0">72%</div>
<svg class="a" style="left:1289px;top:692px" width="9" height="26"><path d="M4.5 1 L1 5 H3.5 V9 H5.5 V5 H8 Z" fill="#e04a3a"/><path d="M4.5 25 L1 21 H3.5 V16 H5.5 V21 H8 Z" fill="#2f9a52"/></svg>
<div class="t" style="left:1309px;top:692px;font-size:10px;color:#222">0.9K/s</div>
<div class="t" style="left:1309px;top:706px;font-size:10px;color:#222">1.2K/s</div>
<div class="a" style="left:1342px;top:696px;width:16px;height:16px;border-radius:50%;background:radial-gradient(circle at 40% 35%,#5fa0ee,#2e6fd0)"></div>
<div class="a" style="left:1346px;top:703px;width:8px;height:2px;background:#fff"></div>
<div class="a" style="left:1349px;top:700px;width:2px;height:8px;background:#fff"></div>
<div class="a" style="left:1354px;top:694px;width:7px;height:7px;border-radius:50%;background:#e03030"></div>

<!-- TASKBAR -->
<div class="a" style="left:0;top:728px;width:1366px;height:40px;background:#03050a"></div>
<!-- start -->
<svg class="a" style="left:16px;top:740px" width="17" height="16" viewBox="0 0 17 16"><path d="M0 2.2 L7 1.2 V7.4 H0Z M8 1 L17 0 V7.4 H8Z M0 8.4 H7 V14.6 L0 13.7Z M8 8.4 H17 V16 L8 14.8Z" fill="#fff"/></svg>
<!-- task view -->
<svg class="a" style="left:62px;top:741px" width="21" height="14" viewBox="0 0 21 14"><rect x="5" y="0.8" width="11" height="12.4" fill="none" stroke="#fff" stroke-width="1.5"/><path d="M2.5 2.5V11.5H1M18.5 2.5V11.5H20M1 2.5H2.5M18.5 2.5H20" stroke="#fff" stroke-width="1.2" fill="none"/></svg>
<!-- explorer -->
<svg class="a" style="left:110px;top:739px" width="23" height="19" viewBox="0 0 23 19"><path d="M0 2 H8 L10 4 H22 V17 H0 Z" fill="#e8c15a"/><rect x="0" y="5" width="22" height="13" fill="#f6d77a"/><path d="M6 18 V12 H16 V18 H13 V15 H9 V18Z" fill="#3aa8d8"/></svg>
<div class="a" style="left:102px;top:766px;width:40px;height:2px;background:#76b9ed"></div>
<!-- store -->
<svg class="a" style="left:160px;top:736px" width="22" height="24" viewBox="0 0 22 24"><path d="M7 6 Q7 1 11 1 Q15 1 15 6" stroke="#fff" stroke-width="1.5" fill="none"/><path d="M1 6 H21 V23 L1 21 Z" fill="#fff"/><path d="M6 10H10.5V14H6ZM11.5 10H16V14H11.5ZM6 15H10.5V19H6ZM11.5 15H16V19H11.5Z" fill="#05070b"/></svg>
<!-- k3 -->
<svg class="a" style="left:209px;top:736px" width="23" height="23" viewBox="0 0 23 23">
 <defs><linearGradient id="k3g" x1="0" y1="0" x2="1" y2="1"><stop offset="0" stop-color="#2a66c8"/><stop offset="1" stop-color="#1a4aa8"/></linearGradient></defs>
 <rect x="0" y="0" width="22" height="22" fill="url(#k3g)"/>
 <path d="M0 20 H22 V22 H0Z" fill="#5ab4f0"/>
 <rect x="2.5" y="4" width="3" height="15" fill="#fff"/>
 <path d="M14 7 L7 11.5 L14 16" stroke="#fff" stroke-width="2.5" fill="none"/>
 <path d="M13 2 L19 6.5 L14 11.5 L19 16.5 L13 21" stroke="#fff" stroke-width="2.5" fill="none"/>
</svg>
<!-- outlook -->
<svg class="a" style="left:257px;top:736px" width="23" height="23" viewBox="0 0 23 23">
 <defs><linearGradient id="olg" x1="0" y1="0" x2="1" y2="1"><stop offset="0" stop-color="#fff0b8"/><stop offset="1" stop-color="#f2c24a"/></linearGradient></defs>
 <path d="M4 0 H22 V21 H0 V4 Q0 0 4 0Z" fill="url(#olg)"/>
 <ellipse cx="7" cy="10" rx="4.2" ry="6" fill="none" stroke="#e2700e" stroke-width="3"/>
 <circle cx="18" cy="10" r="3.5" fill="#fbe8c8" stroke="#e8a050"/>
 <path d="M2 19 Q11 14 22 17" stroke="#f8e0a8" stroke-width="2" fill="none"/>
</svg>
<!-- wechat -->
<div class="a" style="left:306px;top:737px;width:16px;height:13px;border-radius:50%;background:#62c24a"></div>
<div class="a" style="left:314px;top:744px;width:15px;height:12px;border-radius:50%;background:#f2f2f2"></div>
<!-- skype -->
<div class="a" style="left:355px;top:736px;width:23px;height:23px;border-radius:50%;background:#1eaaf1"></div>
<div class="t" style="left:360px;top:739px;font-size:17px;font-weight:bold;color:#fff">S</div>
<div class="a" style="left:347px;top:766px;width:40px;height:2px;background:#76b9ed"></div>
<!-- blue app -->
<div class="a" style="left:403px;top:736px;width:25px;height:23px;border-radius:4px;background:linear-gradient(#5fb4f4,#2a86e0)"></div>
<div class="t" style="left:407px;top:739px;font-size:15px;font-weight:bold;color:#fff">gJ</div>
<!-- remote desktop -->
<svg class="a" style="left:452px;top:736px" width="25" height="23" viewBox="0 0 25 23"><path d="M2 12 L12 9 L24 12 L24 20 L12 23 L2 20Z" fill="#c8ccd0"/><rect x="9" y="2" width="14" height="11" fill="#2a4fd0" stroke="#cfd6e6"/><path d="M4 14 L13 12 L22 14 L13 17Z" fill="#e8eaec"/></svg>
<!-- firefox -->
<svg class="a" style="left:502px;top:736px" width="25" height="25" viewBox="0 0 25 25">
 <defs><radialGradient id="ffg" cx="0.6" cy="0.35" r="0.55"><stop offset="0" stop-color="#5a78d8"/><stop offset="1" stop-color="#2a2f8a"/></radialGradient>
 <linearGradient id="ffo" x1="0" y1="1" x2="1" y2="0"><stop offset="0" stop-color="#d83a12"/><stop offset="0.5" stop-color="#ff8a1a"/><stop offset="1" stop-color="#ffd23a"/></linearGradient></defs>
 <circle cx="12.5" cy="12.5" r="11.5" fill="url(#ffo)"/>
 <circle cx="14" cy="10.5" r="7.5" fill="url(#ffg)"/>
 <path d="M3 9 Q6 20 15 20 Q21 19 22 13 Q19 17 14 16 Q8 15 7 8 Z" fill="#ff9a20"/>
</svg>
<!-- excel active -->
<div class="a" style="left:540px;top:728px;width:47px;height:40px;background:#2b2e33"></div>
<svg class="a" style="left:550px;top:736px" width="24" height="22" viewBox="0 0 24 22">
 <rect x="6.5" y="2.5" width="17" height="18" fill="#f2f6f0" stroke="#9ab894"/>
 <path d="M9 7.5H22M9 11.5H22M9 15.5H22M15.5 3V20" stroke="#b6ccb0"/>
 <rect x="1" y="0.5" width="14" height="21" fill="#e9f3e4" opacity="0.3"/>
 <path d="M2 2 H7 L10 8 L13 2 H18 L12.5 11 L18.5 20 H13.5 L10 14 L6.5 20 H1.5 L7.5 11 Z" fill="#2e9a2e"/>
</svg>
<div class="a" style="left:540px;top:766px;width:47px;height:2px;background:#76b9ed"></div>
<!-- word -->
<div class="a" style="left:600px;top:736px;width:22px;height:22px;background:linear-gradient(#f4f6fb,#cdd8ee);border:1px solid #7f93c0"></div>
<div class="t" style="left:601px;top:737px;font-size:16px;font-weight:bold;color:#2a56b8">W</div>
<div class="a" style="left:592px;top:766px;width:40px;height:2px;background:#76b9ed"></div>

<!-- tray -->
<div class="a" style="left:931px;top:741px;width:14px;height:14px;border-radius:50%;background:#8cc63e"></div>
<svg class="a" style="left:934px;top:744px" width="9" height="8"><path d="M1 4 L3.5 6.5 L8 1.5" stroke="#fff" stroke-width="1.6" fill="none"/></svg>
<svg class="a" style="left:955px;top:741px" width="14" height="14"><rect x="0.75" y="0.75" width="12.5" height="12.5" fill="#444" stroke="#eee" stroke-width="1.5"/><path d="M1 9.5H13M7 9.5V13" stroke="#eee"/></svg>
<svg class="a" style="left:978px;top:742px" width="17" height="12"><path d="M3 11 Q0 11 0.5 8 Q1 6 3.5 6.3 Q4 2 8 2 Q11.5 2 12 5.5 Q16.5 5.5 16.5 8.5 Q16.5 11 13.5 11Z" fill="#8e8e8e"/></svg>
<div class="a" style="left:1001px;top:740px;width:16px;height:16px;background:linear-gradient(#4ea4e8,#2e7cc4);border:1px solid #8cc6f2"></div>
<div class="t" style="left:1004px;top:741px;font-size:10px;color:#fff">[X]</div>
<div class="a" style="left:1026px;top:740px;width:15px;height:16px;background:#3c4a3c"></div>
<div class="a" style="left:1028px;top:744px;width:11px;height:7px;border-radius:50%;border:2px solid #7ab82a"></div>
<svg class="a" style="left:1050px;top:742px" width="17" height="12"><path d="M3 1V4M6 1V4M2 4H7V7Q4.5 9 2 7Z M4.5 8V12" stroke="#fff" stroke-width="1.2" fill="none"/><rect x="8.5" y="3.5" width="7" height="6" fill="none" stroke="#fff"/><rect x="10" y="5" width="4" height="3" fill="#fff"/></svg>
<svg class="a" style="left:1074px;top:740px" width="15" height="16"><ellipse cx="7.5" cy="6" rx="5" ry="5.5" fill="#222"/><ellipse cx="7.5" cy="7" rx="3.5" ry="3.5" fill="#fff"/><path d="M2 10 Q7.5 14 13 10 L14 14 Q7.5 17 1 14Z" fill="#e02a1a"/><ellipse cx="7.5" cy="5" rx="2" ry="1" fill="#f0a010"/></svg>
<div class="a" style="left:1097px;top:743px;width:17px;height:11px;border-radius:3px;background:linear-gradient(90deg,#cfd6de,#9ec6ee);"></div>
<div class="a" style="left:1106px;top:742px;width:9px;height:13px;border-radius:50%;background:#2a80d8"></div>
<svg class="a" style="left:1124px;top:742px" width="15" height="14" viewBox="0 0 15 14"><path d="M1 13 Q1 1 13 1 M3.5 13 Q3.5 3.5 13 3.5 M6 13 Q6 6 13 6 M8.5 13 Q8.5 8.5 13 8.5" stroke="#fff" stroke-width="1.2" fill="none"/><rect x="10" y="10" width="4" height="4" fill="#fff"/></svg>
<div class="a" style="left:1146px;top:741px;width:16px;height:16px;border-radius:50%;background:radial-gradient(circle at 45% 40%,#f6f24a,#b8c818 70%,#6a8a10)"></div>
<div class="a" style="left:1150px;top:748px;width:8px;height:2px;background:#226a10"></div>
<div class="a" style="left:1153px;top:745px;width:2px;height:8px;background:#226a10"></div>
<svg class="a" style="left:1170px;top:741px" width="17" height="14" viewBox="0 0 17 14"><path d="M1 4.5H4L8 1V13L4 9.5H1Z" fill="none" stroke="#fff" stroke-width="1.1"/><path d="M10.5 4.5 Q12 7 10.5 9.5 M12.5 3 Q15 7 12.5 11 M14.5 1.5 Q18 7 14.5 12.5" stroke="#999" stroke-width="1" fill="none"/></svg>
<svg class="a" style="left:1194px;top:740px" width="17" height="17" viewBox="0 0 17 17"><rect x="0" y="0" width="15" height="12" fill="#fff"/><path d="M2 3H13M2 6H13M2 9H9" stroke="#05070b"/><circle cx="12" cy="12" r="4.5" fill="#fff" stroke="#05070b"/><path d="M9.5 12H14.5" stroke="#05070b" stroke-width="1.3"/></svg>
<div class="a" style="left:1218px;top:742px;width:14px;height:14px;border-radius:50%;background:#8a8a8a"></div>
<svg class="a" style="left:1221px;top:745px" width="8" height="8"><path d="M1 1L7 7M7 1L1 7" stroke="#111" stroke-width="1.5"/></svg>
<div class="a" style="left:1247px;top:742px;width:15px;height:14px;background:#e8502a;border-radius:2px;transform:rotate(-8deg)"></div>
<div class="t" style="left:1249px;top:742px;font-size:13px;font-weight:bold;color:#fff;transform:rotate(-8deg)">S</div>
<div class="t" style="left:1292px;top:733px;font-size:13px;color:#fff">5:06 PM</div>
<div class="t" style="left:1282px;top:749px;font-size:13px;color:#fff">2016/07/19</div>
<div class="a" style="left:1361px;top:728px;width:1px;height:40px;background:#5a5d62"></div>
</body></html>
